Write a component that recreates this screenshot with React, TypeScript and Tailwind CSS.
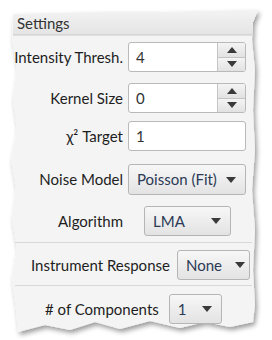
import React from "react";

const font = { fontFamily: 'Lato, "Open Sans", sans-serif' };

function Caret() {
  return (
    <svg width="10" height="6" viewBox="0 0 10 6" className="shrink-0">
      <path d="M0 0 L10 0 L5 6 Z" fill="#3a3a3a" />
    </svg>
  );
}

function Spinner({ value }: { value: string }) {
  return (
    <div className="flex h-[30px] w-[118px] rounded-[3px] border border-[#b9b9b9] bg-white">
      <div className="flex flex-1 items-center pl-[7px] text-[15px] text-[#333]">{value}</div>
      <div className="flex w-[28px] flex-col border-l border-[#c4c4c4]">
        <div className="flex flex-1 items-center justify-center rounded-tr-[2px] border-b border-[#c4c4c4] bg-gradient-to-b from-[#f4f4f4] to-[#e2e2e2]">
          <svg width="10" height="6" viewBox="0 0 10 6">
            <path d="M0 6 L10 6 L5 0 Z" fill="#3a3a3a" />
          </svg>
        </div>
        <div className="flex flex-1 items-center justify-center rounded-br-[2px] bg-gradient-to-b from-[#f4f4f4] to-[#e2e2e2]">
          <Caret />
        </div>
      </div>
    </div>
  );
}

function Select({ value, w, h = 30 }: { value: string; w: string; h?: number }) {
  return (
    <div
      className={`flex items-center justify-between rounded-[3px] border border-[#b5b5b5] bg-gradient-to-b from-[#f7f7f7] to-[#e3e3e3] pl-[8px] pr-[9px] text-[15px] text-[#2b3a55] ${w}`}
      style={{ height: h }}
    >
      <span className="whitespace-nowrap">{value}</span>
      <Caret />
    </div>
  );
}

function Row({ label, children, className = "" }: { label: string; children: React.ReactNode; className?: string }) {
  return (
    <div className={`flex items-center ${className}`}>
      <div className="w-[116px] pr-[5px] text-right text-[15px] text-[#1e1e1e] whitespace-nowrap">{label}</div>
      <div className="flex flex-1 justify-start">{children}</div>
    </div>
  );
}

export default function App() {
  return (
    <div className="relative h-[340px] w-[272px] overflow-hidden bg-white" style={font}>
      <svg width="272" height="340" className="absolute left-0 top-0">
        <defs>
          <filter id="sh" x="-10%" y="-10%" width="120%" height="120%">
            <feDropShadow dx="2" dy="3" stdDeviation="2.5" floodColor="#000" floodOpacity="0.4" />
          </filter>
          <linearGradient id="hd" x1="0" y1="0" x2="0" y2="1">
            <stop offset="0" stopColor="#f3f3f3" />
            <stop offset="1" stopColor="#e4e4e4" />
          </linearGradient>
        </defs>
        <path
          filter="url(#sh)"
          fill="#f4f4f4"
          d="M13 14 L60 13 L110 12 L160 12 L210 11 L258 10 L253 22 L252 40 L255 70 L253 110 L255 150 L252 190 L255 230 L253 270 L255 305 L253 322 L230 327 L205 322 L180 328 L150 321 L120 329 L95 322 L70 330 L45 325 L18 332 L16 310 L12 280 L17 250 L12 220 L16 190 L11 160 L17 130 L13 100 L17 70 L12 40 Z"
        />
        <path fill="url(#hd)" d="M13 14 L60 13 L110 12 L160 12 L210 11 L258 10 L253 22 L252 35 L13 35 Z" />
        <line x1="13" y1="35" x2="252" y2="35" stroke="#c9c9c9" />
        <line x1="15" y1="242.5" x2="252" y2="242.5" stroke="#d8d8d8" />
        <line x1="15" y1="285.5" x2="252" y2="285.5" stroke="#d8d8d8" />
      </svg>

      <div className="relative pl-[12px] pt-[12px]">
        <div className="flex h-[23px] items-center pl-[5px] text-[15px] text-[#333]">Settings</div>
        <Row label="Intensity Thresh." className="mt-[7px]">
          <Spinner value="4" />
        </Row>
        <Row label="Kernel Size" className="mt-[11px]">
          <Spinner value="0" />
        </Row>
        <Row label="χ² Target" className="mt-[8px]">
          <div className="flex h-[30px] w-[118px] items-center rounded-[3px] border border-[#b9b9b9] bg-white pl-[7px] text-[15px] text-[#333]">
            1
          </div>
        </Row>
        <Row label="Noise Model" className="mt-[13px]">
          <Select value="Poisson (Fit)" w="w-[118px]" h={31} />
        </Row>
        <Row label="Algorithm" className="mt-[11px]">
          <div className="ml-[16px]">
            <Select value="LMA" w="w-[87px]" />
          </div>
        </Row>
        <div className="mt-[14px] flex items-center gap-[7px] pl-[19px]">
          <span className="text-[15px] text-[#1e1e1e] whitespace-nowrap">Instrument Response</span>
          <div className="relative flex h-[30px] w-[73px] items-center rounded-[3px] border border-[#b5b5b5] bg-gradient-to-b from-[#f7f7f7] to-[#e3e3e3] pl-[8px] text-[15px] text-[#2b3a55]">
            <span>None</span>
            <span className="absolute right-[4px] top-[11px]">
              <Caret />
            </span>
          </div>
        </div>
        <div className="mt-[14px] flex items-center gap-[10px] pl-[33px]">
          <span className="text-[15px] text-[#1e1e1e] whitespace-nowrap"># of Components</span>
          <Select value="1" w="w-[53px]" />
        </div>
      </div>
    </div>
  );
}
